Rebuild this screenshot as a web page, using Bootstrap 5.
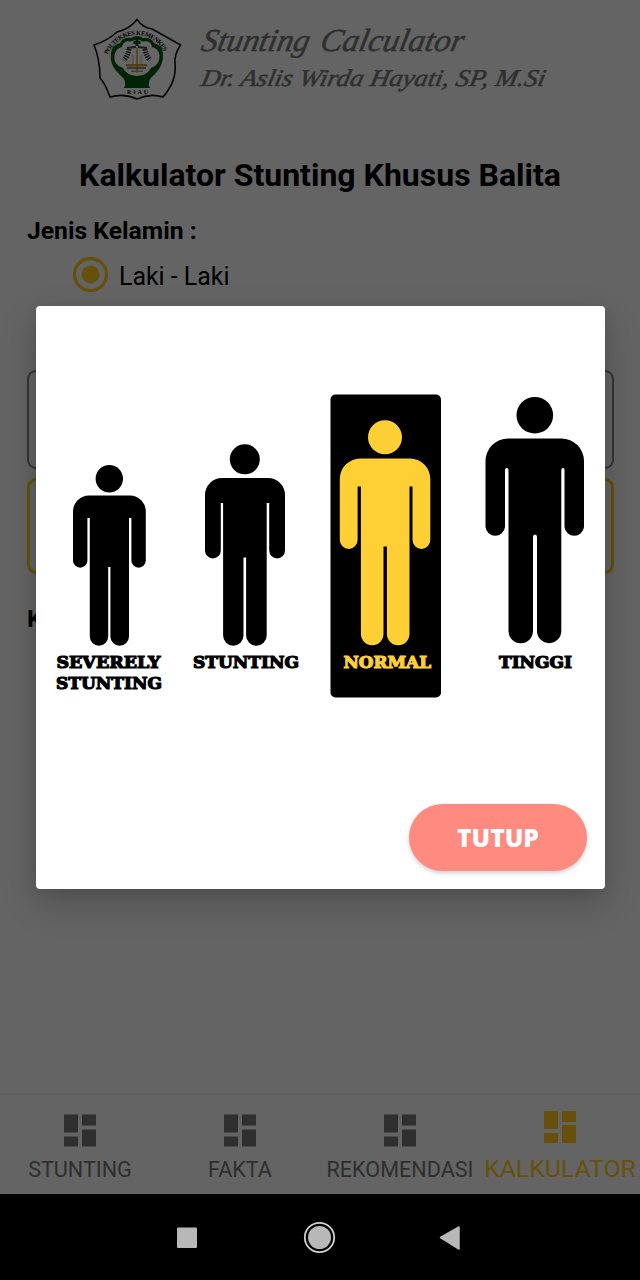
<!DOCTYPE html>
<html lang="id">
<head>
<meta charset="utf-8">
<meta name="viewport" content="width=device-width, initial-scale=1">
<title>Stunting Calculator</title>
<link href="https://cdn.jsdelivr.net/npm/bootstrap@5.3.0/dist/css/bootstrap.min.css" rel="stylesheet">
<style>
  body { font-family: Roboto, sans-serif; color: #000; background: #fafafa; height: 1280px; overflow: hidden; }
  .phone { width: 640px; height: 1280px; }
  .app { height: 1194px; background: #fafafa; }
  .masthead { height: 118px; padding: 16px 0 0 91px; gap: 15px; }
  .page-title { font-size: 32px; line-height: 38px; font-weight: 700; margin-top: 38px; }
  .field-label { font-size: 24.7px; line-height: 30px; font-weight: 700; padding: 22px 0 0 27px; }
  .field-label.next { padding-top: 30px; }
  .choice { padding-left: 72px; gap: 11px; height: 38px; margin-top: 10px; font-size: 24.9px; }
  .choice span { padding-top: 3px; }
  .box { border: 2px solid #858585; border-radius: 9px; height: 99px; margin: 76px 26.5px 0; }
  .box-active { border: 3px solid #ffc81c; height: 96px; margin-top: 9px; }
  .tabs { height: 101px; border-top: 2px solid #ededed; color: #757575; font-size: 21.6px; }
  .tabs a { width: 160px; padding-top: 16px; color: inherit; white-space: nowrap; line-height: 26px; }
  .tabs a.on { color: #ffc81c; font-size: 24.8px; padding-top: 12px; }
  .tabs svg { margin: 3px 0 10px; }
  .tabs .on svg { margin-bottom: 13px; margin-top: 4px; }
  .dim { background: rgba(0,0,0,.6); height: 1194px; }
  .dialog { width: 569px; height: 583px; margin-top: 306px; border-radius: 4px; box-shadow: 0 14px 36px rgba(0,0,0,.2), 0 3px 12px rgba(0,0,0,.08); }
  .btn-close-result { width: 178px; height: 67px; padding-top: 8px; margin: 0 17.5px 18px 0; background: #ff8a80 !important; color: #fff !important; font: 800 24.6px/1 "Open Sans", sans-serif; box-shadow: 0 2px 4px rgba(0,0,0,.2); border: 0; }
  .sysbar { height: 86px; }
</style>
</head>
<body>
<div class="phone position-relative bg-black">
  <div class="app d-flex flex-column">
    <header class="masthead d-flex">
      <svg width="92" height="86" viewBox="91 16 92 86">
        <path d="M137 19.500Q143 28 152 29Q163 35 180.500 45Q174 55 175 63Q177 81 163 97Q150 93 137 99Q124 93 110 97Q105 83 100 78Q100 59 94 45Q107 41 117 32Q130 29 137 19.500Z" fill="#fff" stroke="#111" stroke-width="1.600"/>
        <path d="M124 88Q128 81 119 74Q109 65 111 53Q112 45 120 43Q123 37 131 38Q137 34 143 38Q151 37 154 43Q162 45 163 53Q164 65 155 74Q146 81 150 88Z" fill="#005a0e"/>
        <path d="M123 68Q113 65 114.500 55Q116 48 122 47Q123 40 131 41.500Q137 38 143 41.500Q151 40 152 47Q158 48 159.500 55Q160 65 151 68Q148 75 137 76Q126 75 123 68Z" fill="#fff"/>
        <path d="M137 39v7M133.500 42.500h7" stroke="#005a0e" stroke-width="3"/>
        <path d="M127 48L136 47M147 48L138 47" stroke="#444" stroke-width="2"/>
        <path d="M129 49Q128 56 124 60M145 49Q146 56 150 60" fill="none" stroke="#444" stroke-width="5" stroke-dasharray="1.500 .9"/>
        <path d="M137 48v25" stroke="#c08a2a" stroke-width="1.300"/>
        <path d="M133 55v9M141 55v9" stroke="#b8a880" stroke-width=".8"/>
        <path d="M126 64h21v2.500h-21zM131 70.500h12v1.600h-12z" fill="#d59a22"/><path d="M127 68h19" stroke="#1a5a9a" stroke-width="1.300"/>
        <path id="arc" d="M107.500 55Q118 35 137 35Q156 35 167 57" fill="none"/>
        <text font-family="Liberation Serif, serif" font-weight="700" font-size="6.500"><textPath href="#arc" textLength="71">POLTEKKES KEMENKES</textPath></text>
        <text x="127" y="94" font-family="Liberation Serif, serif" font-weight="700" font-size="6" textLength="21">RIAU</text>
      </svg>
      <svg width="360" height="86" viewBox="198 16 360 86" fill="#757575" stroke="#757575" stroke-width=".5" font-family="Liberation Serif, serif" font-style="italic">
        <g transform="translate(200 51) skewX(-12)"><text font-size="32" textLength="108" lengthAdjust="spacingAndGlyphs">Stunting</text><text x="119" font-size="32" textLength="143" lengthAdjust="spacingAndGlyphs">Calculator</text></g>
        <g transform="translate(200 86) skewX(-12)"><text font-size="24" textLength="344" lengthAdjust="spacingAndGlyphs">Dr. Aslis Wirda Hayati, SP, M.Si</text></g>
      </svg>
    </header>
    <main class="flex-grow-1">
      <h1 class="page-title text-center mb-0">Kalkulator Stunting Khusus Balita</h1>
      <div class="field-label">Jenis Kelamin :</div>
      <div class="choice d-flex align-items-center">
        <svg width="36" height="36"><circle cx="18.500" cy="17.500" r="16" fill="none" stroke="#ffc81c" stroke-width="3.300"/><circle cx="18.500" cy="17.500" r="9" fill="#ffc81c"/></svg>
        <span>Laki - Laki</span>
      </div>
      <div class="box"></div>
      <div class="box box-active"></div>
      <div class="field-label next">Kategori</div>
    </main>
    <nav class="tabs d-flex">
      <a class="d-flex flex-column align-items-center text-decoration-none"><svg width="32" height="33" fill="currentColor"><path d="M0 .5h14v18H0zM18 .5h14v11H18zM0 22.500h14v10H0zM18 15.500h14v17H18z"/></svg>STUNTING</a>
      <a class="d-flex flex-column align-items-center text-decoration-none"><svg width="32" height="33" fill="currentColor"><path d="M0 .5h14v18H0zM18 .5h14v11H18zM0 22.500h14v10H0zM18 15.500h14v17H18z"/></svg>FAKTA</a>
      <a class="d-flex flex-column align-items-center text-decoration-none"><svg width="32" height="33" fill="currentColor"><path d="M0 .5h14v18H0zM18 .5h14v11H18zM0 22.500h14v10H0zM18 15.500h14v17H18z"/></svg>REKOMENDASI</a>
      <a class="on d-flex flex-column align-items-center text-decoration-none"><svg width="32" height="32" fill="currentColor"><path d="M0 0h14v18H0zM18 0h14v11H18zM0 22h14v10H0zM18 14h14v18H18z"/></svg>KALKULATOR</a>
    </nav>
  </div>

  <div class="dim position-absolute top-0 start-0 w-100 d-flex justify-content-center align-items-start overflow-hidden">
    <div class="dialog bg-white d-flex flex-column justify-content-between align-items-end" role="dialog">
      <svg width="569" height="410" viewBox="36 306 569 410">
        <rect x="330.500" y="394.500" width="110.500" height="303" rx="5"/>
        <circle cx="109.300" cy="478.700" r="13.700"/>
        <path d="M89 495.500H130A16 16 0 0 1 145.800 511.500V560.500A7.200 7.200 0 0 1 131.400 560.500V518H129V636.500A9.300 9.300 0 0 1 110.400 636.500V567H108.200V636.500A9.200 9.200 0 0 1 89.800 636.500V518H87.400V560.500A7.200 7.200 0 0 1 73 560.500V511.500A16 16 0 0 1 89 495.500Z"/>
        <circle cx="244.800" cy="459.300" r="15"/>
        <path d="M222 478H268A17 17 0 0 1 285 495V550.500A7.900 7.900 0 0 1 269.200 550.500V503H266.700V635.500A10.300 10.300 0 0 1 246.100 635.500V557.500H243.500V635.500A10.200 10.200 0 0 1 223.100 635.500V503H220.800V550.500A7.900 7.900 0 0 1 205 550.500V495A17 17 0 0 1 222 478Z"/>
        <g fill="#ffd035"><circle cx="385" cy="437.300" r="17"/>
        <path d="M360 458.500H410A20.500 20.500 0 0 1 430.300 479V540A8.900 8.900 0 0 1 412.500 540V486.500H409.500V634A11.300 11.300 0 0 1 386.900 634V546.500H383.500V634A11.300 11.300 0 0 1 360.900 634V486.500H357.600V540A8.900 8.900 0 0 1 339.800 540V479A20.500 20.500 0 0 1 360 458.500Z"/></g>
        <circle cx="534.800" cy="415.200" r="18.300"/>
        <path d="M508 438.500H561.500A22.500 22.500 0 0 1 584 461V527A9.800 9.800 0 0 1 564.500 527V470Q564.500 468 563 468T561.300 470V631A12.100 12.100 0 0 1 537 631V537Q537 534.500 535 534.500T533 537V631A12.200 12.200 0 0 1 508.500 631V470Q508.500 468 506.700 468T505 470V527A9.800 9.800 0 0 1 485.500 527V461A22.500 22.500 0 0 1 508 438.500Z"/>
        <g font-family="DejaVu Serif, serif" font-weight="700" font-size="16.800" stroke="#000" stroke-width="1.200">
          <text x="56.500" y="667.500" textLength="104" lengthAdjust="spacingAndGlyphs">SEVERELY</text>
          <text x="56" y="689" textLength="106" lengthAdjust="spacingAndGlyphs">STUNTING</text>
          <text x="193" y="667.500" textLength="106" lengthAdjust="spacingAndGlyphs">STUNTING</text>
          <text x="343.500" y="667.500" textLength="87.500" lengthAdjust="spacingAndGlyphs" fill="#ffd035" stroke="#ffd035">NORMAL</text>
          <text x="499" y="667.500" textLength="73" lengthAdjust="spacingAndGlyphs">TINGGI</text>
        </g>
      </svg>
      <button type="button" class="btn rounded-pill btn-close-result">TUTUP</button>
    </div>
  </div>

  <div class="sysbar bg-black">
    <svg width="640" height="86" fill="#b8b8b8"><rect x="177" y="33.500" width="20" height="20.500" rx="1"/><circle cx="319.500" cy="43.500" r="11.500"/><circle cx="319.500" cy="43.500" r="14.700" fill="none" stroke="#d0d0d0" stroke-width="1.800"/><path d="M440.500 43.500L459 33V55Z" stroke="#b8b8b8" stroke-linejoin="round" stroke-width="1.500"/></svg>
  </div>
</div>
<script src="https://cdn.jsdelivr.net/npm/bootstrap@5.3.0/dist/js/bootstrap.bundle.min.js"></script>
</body>
</html>
